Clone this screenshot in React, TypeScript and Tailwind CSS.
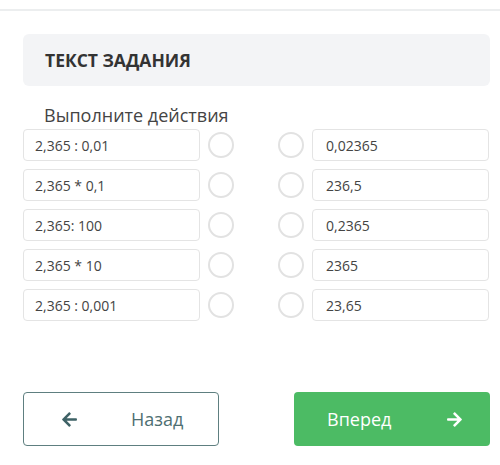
import { FaArrowLeft, FaArrowRight } from "react-icons/fa";

const rows = [
  { left: "2,365 : 0,01", right: "0,02365" },
  { left: "2,365 * 0,1", right: "236,5" },
  { left: "2,365: 100", right: "0,2365" },
  { left: "2,365 * 10", right: "2365" },
  { left: "2,365 : 0,001", right: "23,65" },
];

export default function App() {
  return (
    <div
      className="w-[500px] h-[465px] bg-white relative overflow-hidden"
      style={{ fontFamily: "'Open Sans', sans-serif" }}
    >
      <div className="h-[11px] border-b-2 border-[#eceeef]" />

      <div className="px-[23px] pr-[10px]">
        <div className="mt-[23px] h-[52px] rounded-md bg-[#f3f4f6] flex items-center pl-[22px]">
          <span className="text-[17.5px] font-bold text-[#333]">ТЕКСТ ЗАДАНИЯ</span>
        </div>

        <div className="mt-[17px] pl-[21px] text-[18px] leading-[24px] text-[#444]">Выполните действия</div>

        <div className="mt-[2px] flex flex-col gap-[8px]">
          {rows.map((r, i) => (
            <div key={i} className="flex items-center h-[32px]">
              <div className="w-[177px] h-[32px] border border-[#e4e4e4] rounded-[4px] flex items-center pl-[11px] text-[14px] text-[#444]">
                {r.left}
              </div>
              <div className="ml-[8px] w-[26px] h-[26px] rounded-full border-2 border-[#e2e2e2]" />
              <div className="ml-[44px] w-[26px] h-[26px] rounded-full border-2 border-[#e2e2e2]" />
              <div className="ml-[8px] w-[177px] h-[32px] border border-[#e4e4e4] rounded-[4px] flex items-center pl-[13px] text-[14px] text-[#444]">
                {r.right}
              </div>
            </div>
          ))}
        </div>

        <div className="mt-[71px] flex justify-between">
          <button className="w-[196px] h-[54px] border border-[#5e7f80] rounded-[4px] flex items-center text-[#4f6f72]">
            <FaArrowLeft className="ml-[37px] w-[17px] h-[17px] text-[#3e6266]" />
            <span className="ml-[53px] text-[18px]">Назад</span>
          </button>
          <button className="w-[196px] h-[54px] bg-[#4cbb64] rounded-[4px] flex items-center text-white">
            <span className="ml-[33px] text-[18px]">Вперед</span>
            <FaArrowRight className="ml-[55px] w-[17px] h-[17px]" />
          </button>
        </div>
      </div>
    </div>
  );
}
